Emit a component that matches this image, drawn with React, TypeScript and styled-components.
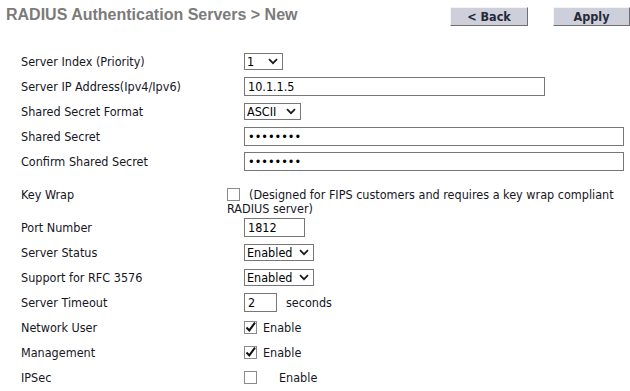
import styled, { createGlobalStyle } from 'styled-components'

const GlobalStyle = createGlobalStyle`
    html, body {
        margin: 0;
        padding: 0;
        background: #fff;
        overflow: hidden;
    }
    body {
        font-family: 'DejaVu Sans Condensed', 'DejaVu Sans', sans-serif;
        font-stretch: condensed;
        font-size: 12.5px;
        color: #16161e;
    }
`

type TSelectProps = {
    width: number
    value: string
    options: string[]
}

function Select(props: TSelectProps) {
    return (
        <SelectBox $width={props.width}>
            <NativeSelect defaultValue={props.value}>
                {props.options.map(o => (
                    <option key={o}>{o}</option>
                ))}
            </NativeSelect>
            <svg width="10" height="7" viewBox="0 0 10 7">
                <path d="M1 1.2 L5 5.2 L9 1.2" fill="none" stroke="#1a1a1a" strokeWidth="1.7" />
            </svg>
        </SelectBox>
    )
}

function Check(props: { checked?: boolean }) {
    return (
        <Box>
            {props.checked && (
                <svg width="13" height="13" viewBox="0 0 13 13">
                    <path d="M2.5 6.5 L5.3 9.4 L11 1.6" fill="none" stroke="#111" strokeWidth="2" />
                </svg>
            )}
        </Box>
    )
}

export default function App() {
    return (
        <Page>
            <GlobalStyle />
            <Header>
                <Title>RADIUS Authentication Servers &gt; New</Title>
                <Buttons>
                    <NavButton>&lt; Back</NavButton>
                    <NavButton>Apply</NavButton>
                </Buttons>
            </Header>

            <Form>
                <Row>
                    <Label>Server Index (Priority)</Label>
                    <Select width={39} value="1" options={['1', '2', '3', '4', '5', '6']} />
                </Row>
                <Row>
                    <Label>Server IP Address(Ipv4/Ipv6)</Label>
                    <Input $width={301} defaultValue="10.1.1.5" />
                </Row>
                <Row>
                    <Label>Shared Secret Format</Label>
                    <Select width={57} value="ASCII" options={['ASCII', 'Hex']} />
                </Row>
                <Row>
                    <Label>Shared Secret</Label>
                    <Input $width={380} type="password" defaultValue="secret12" />
                </Row>
                <Row>
                    <Label>Confirm Shared Secret</Label>
                    <Input $width={380} type="password" defaultValue="secret12" />
                </Row>
                <TallRow>
                    <Label>Key Wrap</Label>
                    <Note>
                        <Check />
                        (Designed for FIPS customers and requires a key wrap compliant RADIUS server)
                    </Note>
                </TallRow>
                <Row>
                    <Label>Port Number</Label>
                    <Input $width={61} defaultValue="1812" />
                </Row>
                <Row>
                    <Label>Server Status</Label>
                    <Select width={70} value="Enabled" options={['Enabled', 'Disabled']} />
                </Row>
                <Row>
                    <Label>Support for RFC 3576</Label>
                    <Select width={70} value="Enabled" options={['Enabled', 'Disabled']} />
                </Row>
                <Row>
                    <Label>Server Timeout</Label>
                    <Inline $gap={9}>
                        <Input $width={33} defaultValue="2" />
                        seconds
                    </Inline>
                </Row>
                <Row>
                    <Label>Network User</Label>
                    <Inline $gap={6}>
                        <Check checked />
                        Enable
                    </Inline>
                </Row>
                <Row>
                    <Label>Management</Label>
                    <Inline $gap={6}>
                        <Check checked />
                        Enable
                    </Inline>
                </Row>
                <Row>
                    <Label>IPSec</Label>
                    <Inline $gap={22}>
                        <Check />
                        Enable
                    </Inline>
                </Row>
            </Form>
        </Page>
    )
}

const Page = styled.div`
    width: 630px;
    height: 391px;
`

const Header = styled.div`
    display: flex;
    justify-content: space-between;
    align-items: flex-start;
    height: 26px;
    padding: 5px 0 0 6px;
`

const Title = styled.h1`
    margin: 0;
    font-family: 'Liberation Sans', Arial, sans-serif;
    font-stretch: normal;
    font-size: 16px;
    line-height: 20px;
    font-weight: 700;
    color: #7b7b7b;
`

const Buttons = styled.div`
    display: flex;
    gap: 25px;
    margin-top: 2px;
`

const NavButton = styled.button`
    width: 78px;
    height: 19px;
    padding: 0;
    font-family: inherit;
    font-stretch: condensed;
    font-size: 12.5px;
    font-weight: 700;
    color: #262a3a;
    background: #cdd0da;
    border: 1px solid;
    border-color: #f4f4f4 #707070 #707070 #f4f4f4;
    cursor: pointer;
    &:last-child {
        width: 77px;
    }
`

const Form = styled.div`
    padding: 17.5px 0 0 21px;
`

const Row = styled.div`
    display: grid;
    grid-template-columns: 223px auto;
    align-items: center;
    height: 25px;
`

const TallRow = styled.div`
    display: grid;
    grid-template-columns: 206px auto;
    align-items: start;
    height: 41px;
    padding-top: 14px;
    box-sizing: border-box;
    line-height: 14px;
`

const Label = styled.div`
    white-space: nowrap;
`

const Note = styled.div`
    width: 395px;
    line-height: 14px;
    & > span {
        display: inline-block;
        vertical-align: -2px;
        margin: 0 9px 0 0;
    }
`

const Inline = styled.div<{ $gap: number }>`
    display: flex;
    align-items: center;
    gap: ${p => p.$gap}px;
`

const Input = styled.input<{ $width: number }>`
    box-sizing: border-box;
    width: ${p => p.$width}px;
    height: 19px;
    padding: 0 3px;
    border: 1px solid #777;
    font-family: inherit;
    font-stretch: condensed;
    font-size: 12.5px;
    color: #000;
    outline: none;
`

const SelectBox = styled.div<{ $width: number }>`
    box-sizing: border-box;
    display: flex;
    align-items: center;
    width: ${p => p.$width}px;
    height: 17px;
    padding: 0 4px 0 2px;
    border: 1px solid #777;
    background: #fff;
`

const NativeSelect = styled.select`
    flex: 1;
    min-width: 0;
    appearance: none;
    border: none;
    background: transparent;
    padding: 0;
    font-family: inherit;
    font-stretch: condensed;
    font-size: 12.5px;
    color: #000;
    outline: none;
`

const Box = styled.span`
    position: relative;
    box-sizing: border-box;
    display: block;
    width: 13px;
    height: 13px;
    border: 1px solid #8a8a8a;
    background: #fff;
    & > svg {
        position: absolute;
        top: -1px;
        left: -1px;
    }
`
